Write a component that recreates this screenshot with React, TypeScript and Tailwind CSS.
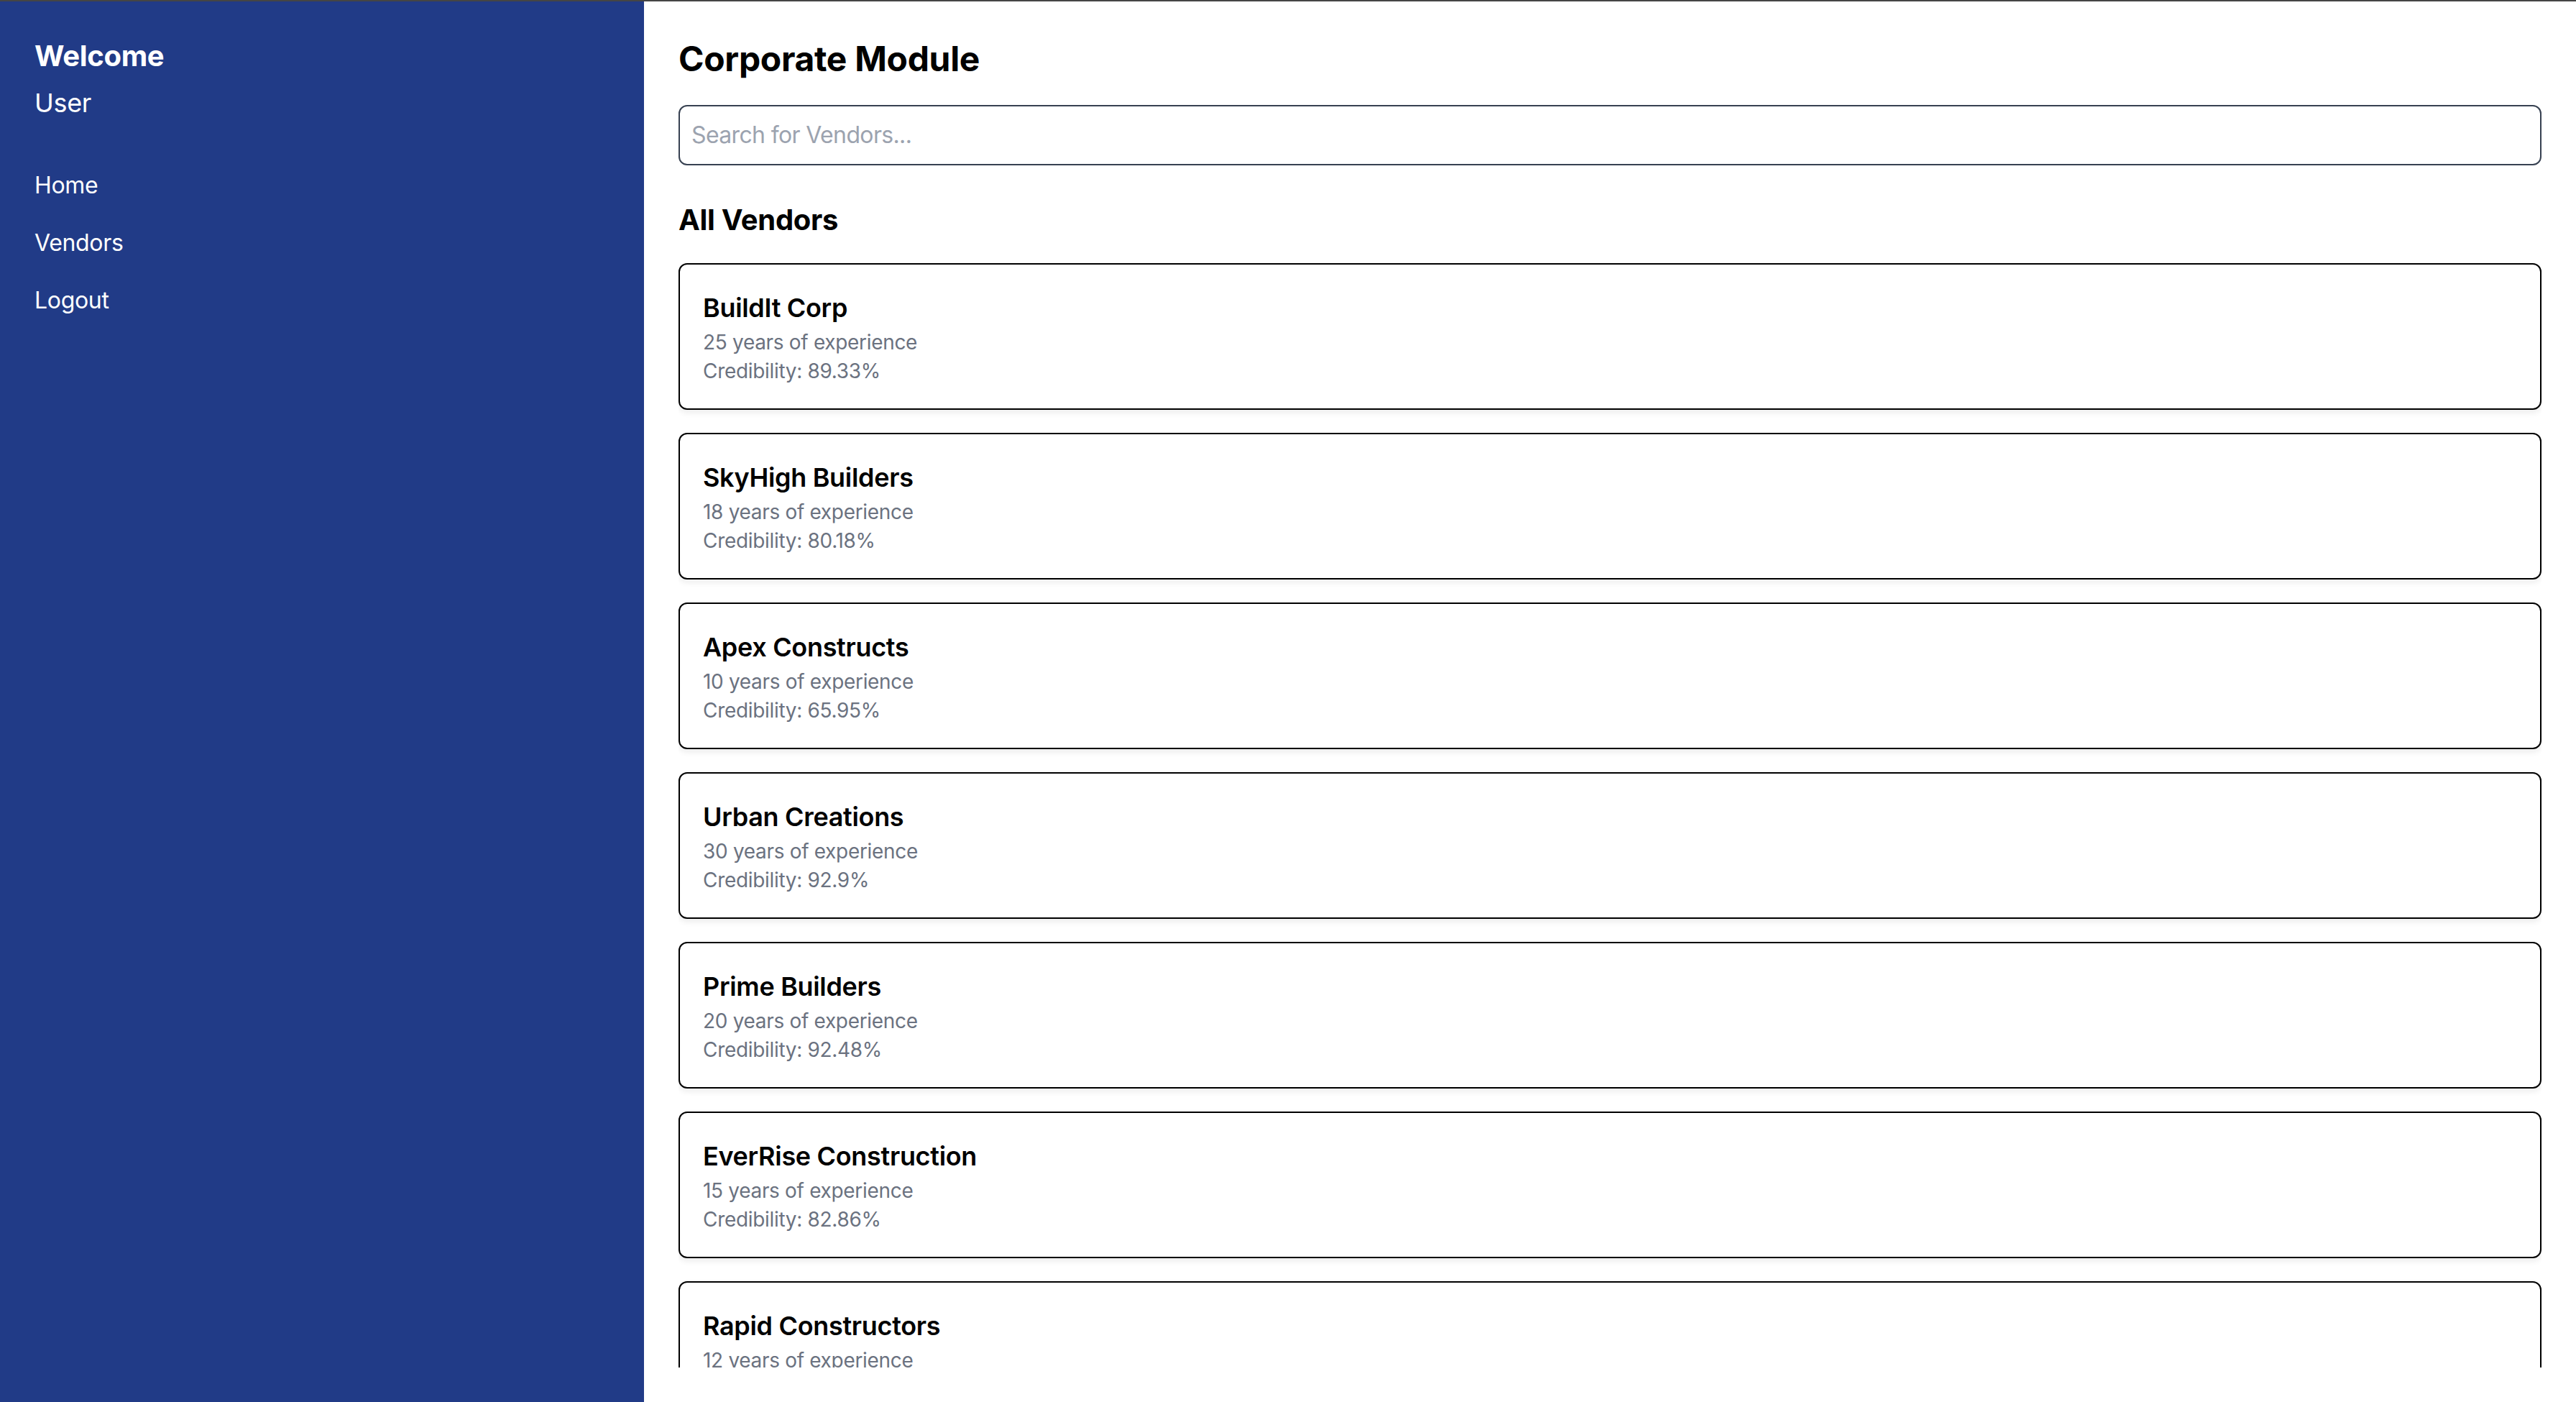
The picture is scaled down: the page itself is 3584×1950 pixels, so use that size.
import React from "react";

type Vendor = {
  name: string;
  years: number;
  credibility: number;
};

const vendors: Vendor[] = [
  { name: "BuildIt Corp", years: 25, credibility: 89.33 },
  { name: "SkyHigh Builders", years: 18, credibility: 80.18 },
  { name: "Apex Constructs", years: 10, credibility: 65.95 },
  { name: "Urban Creations", years: 30, credibility: 92.9 },
  { name: "Prime Builders", years: 20, credibility: 92.48 },
  { name: "EverRise Construction", years: 15, credibility: 82.86 },
  { name: "Rapid Constructors", years: 12, credibility: 78.41 },
  { name: "Summit Developers", years: 22, credibility: 88.12 },
];

function Sidebar() {
  return (
    <aside className="w-[896px] shrink-0 bg-[#213b87] p-[48px] text-white">
      <h2 className="text-[40px] leading-[56px] font-bold">Welcome</h2>
      <p className="mt-[9px] text-[36px] leading-[56px]">User</p>
      <nav className="mt-[63px] flex flex-col gap-[32px] text-[32px] leading-[48px]">
        <a href="#">Home</a>
        <a href="#">Vendors</a>
        <a href="#">Logout</a>
      </nav>
    </aside>
  );
}

function VendorCard({ vendor }: { vendor: Vendor }) {
  return (
    <div className="shrink-0 rounded-[12px] border-2 border-black bg-white p-[32px] shadow-[0_4px_8px_rgba(0,0,0,0.08)]">
      <h4 className="text-[36px] leading-[56px] font-semibold text-black">
        {vendor.name}
      </h4>
      <p className="text-[28px] leading-[40px] text-[#6b7280]">
        {vendor.years} years of experience
      </p>
      <p className="text-[28px] leading-[40px] text-[#6b7280]">
        Credibility: {vendor.credibility}%
      </p>
    </div>
  );
}

export default function App() {
  return (
    <div className="flex h-screen border-t-2 border-[#454545] font-['Inter',sans-serif] tracking-[-0.02em]">
      <Sidebar />
      <main className="flex min-w-0 flex-1 flex-col bg-white p-[48px]">
        <h1 className="text-[48px] leading-[64px] font-bold text-black">
          Corporate Module
        </h1>
        <input
          type="text"
          placeholder="Search for Vendors..."
          className="mt-[32px] w-full rounded-[12px] border-2 border-[#374151] px-[16px] py-[16px] text-[32px] leading-[48px] tracking-[-0.02em] outline-none placeholder:text-[#9ca3af]"
        />
        <h3 className="mt-[48px] text-[40px] leading-[56px] font-bold text-black">
          All Vendors
        </h3>
        {/* list is clipped by the page padding, like the scroll area */}
        <div className="mt-[32px] flex min-h-0 flex-1 flex-col gap-[32px] overflow-hidden">
          {vendors.map((vendor) => (
            <VendorCard key={vendor.name} vendor={vendor} />
          ))}
        </div>
      </main>
    </div>
  );
}
